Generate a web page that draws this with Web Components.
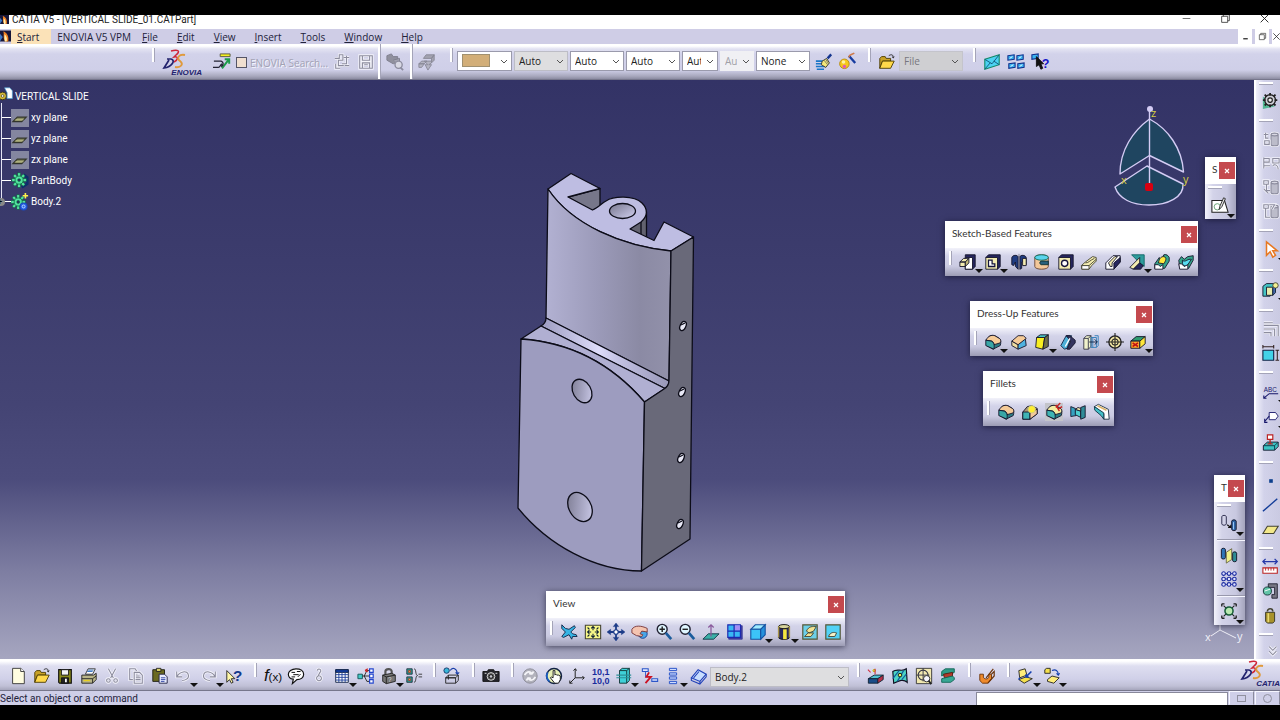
<!DOCTYPE html>
<html lang="en">
<head>
<meta charset="utf-8">
<title>CATIA V5 - [VERTICAL SLIDE_01.CATPart]</title>
<style>
  html, body { height: 100%; margin: 0; }
  body { background: #000; color: #22223a; font: 10px/14px "Open Sans", "Noto Sans", sans-serif; overflow: hidden; }
</style>
</head>
<body>
<catia-app></catia-app>
<script>
/* ---------- icon set, drawn on a 20 x 20 grid ---------- */
const p = (d, f = 'none', s = '#15152b', w = 1) => `<path d="${d}" fill="${f}" stroke="${s}" stroke-width="${w}"/>`;
const c = (x, y, r, f = 'none', s = '#15152b', w = 1) => `<circle cx="${x}" cy="${y}" r="${r}" fill="${f}" stroke="${s}" stroke-width="${w}"/>`;
const t = (x, y, txt, size, fill, extra = '') => `<text x="${x}" y="${y}" font-size="${size}" fill="${fill}" font-family="Liberation Sans, sans-serif" ${extra}>${txt}</text>`;
const GRAY = '#8c8c9e', LT = '#f4f4fb';
const ghost = (d, f = 'none') => p(d, 'none', LT, 3) + p(d, f, GRAY, 1.200);
const block = (front, body, top) =>
  p('M3 8C5 3 8 2 12 3L17 6C19 8 19 11 18 14L10 18 3 14Z', body) +
  p('M2 8C5 3 8 2 12 3L17 6C19 7 19 9 18 11L11 13C11 11 10 10 9 9Z', top) +
  p('M2 8 8 9C11 10 12 13 11 18L2 14Z', front);
const gear = (x, y, f) => {
  let s = '';
  for (let i = 0; i < 8; i++) s += `<rect x="${x - 1.5}" y="${y - 8}" width="3" height="5" fill="${f}" stroke="#063" stroke-width=".5" transform="rotate(${i * 45} ${x} ${y})"/>`;
  return s + c(x, y, 4.500, f, '#063', .8) + c(x, y, 1.600, '#2b2b60', '#063', .6);
};
const tank = ghost('M10 5C10 3 18 3 18 5V16C18 18 10 18 10 16ZM10 5C10 7 18 7 18 5', '#bcbcca');
const ICONS = {
  new: p('M4 1.500H13L17 5V18.500H4Z', '#fffde0', '#333') + p('M13 1.500V5H17', '#fff', '#333'),
  open: p('M2 6 4 4H8L9 6H14V9H5L2 17Z', '#c9a227', '#4a3a00') + p('M5 9H18L14 17H2Z', '#ffd84a', '#4a3a00') + p('M12 3C15 1 17 2 17 5M15.500 4 17 5.500 18 4', 'none', '#222'),
  save: p('M3 3H17V18H4L3 17Z', '#8a8a1a', '#111', 1.3) + p('M6 3H14V9H6Z', '#f4f4f4', '#111') + p('M6 12H14V18H6Z', '#222', '#111') + p('M11 13V17', 'none', '#fff', 2),
  print: p('M6 8 9 2H17L14 8Z', '#fff', '#333') + p('M8 5H14M9 3.500H15', 'none', '#2a6cc0') + p('M2 9H15L18 7V14L14 18H2Z', '#b9b58a', '#222') + p('M2 13H14L18 10M14 13V18', 'none', '#222') + p('M4 15H11', 'none', '#e8d020', 1.500),
  cut: ghost('M6 2 12 13M14 2 8 13') + ghost('M4 15A2 2 0 1 0 8 15 2 2 0 1 0 4 15M12 15A2 2 0 1 0 16 15 2 2 0 1 0 12 15'),
  copy: ghost('M3 2H9L11 5V14H3Z') + ghost('M8 6H14L17 9V18H8ZM10 10H14M10 12H15M10 14H15'),
  paste: p('M2 3H15V16H2Z', '#6b6a20', '#1c1c10') + p('M6 1.500H11V5H6Z', '#d8cf66', '#222') + p('M9 8H15L18 11V18H9Z', '#e8ecff', '#224') + p('M11 12H16M11 14H16M11 16H15', 'none', '#2a3ea0'),
  undo: ghost('M3 5V11H9M3 11C6 5 15 3 16 9C17 13 12 15 9 15'),
  redo: ghost('M17 5V11H11M17 11C14 5 5 3 4 9C3 13 8 15 11 15'),
  help: p('M2 4V17L5 14 7 18 9 17 7 13H11Z', '#fff7a8', '#222') + t(9, 15, '?', 17, '#123a8c', 'font-weight="bold"'),
  fx: t(0, 15, 'f', 19, '#111', 'font-style="italic"') + t(5, 15, '(x)', 13, '#111'),
  bubble: p('M10 2C15 2 18.500 4 18.500 8S15 14 11 14L6 18.500 7 13.500C3 13 1.500 11 1.500 8S5 2 10 2Z', '#fff', '#111', 1.300) + p('M5 6H9M7 8.500H13M11 5H15M5 11H9M12 11 15 8', 'none', '#111', 1.100),
  link: ghost('M8 4A2 2 0 1 1 11 6L9 10M9 10A2.500 2.500 0 1 0 11 15 2 2 0 1 0 9 10'),
  table: p('M3 3H17V17H3Z', '#fff', '#124') + p('M3 3H17V6H3Z', '#123ca0', '#124') + p('M3 8.500H17M3 11.500H17M3 14.500H17M6.500 6V17M10 6V17M13.500 6V17', 'none', '#1c3d9a'),
  reltree: p('M1 8H6V13H1Z', '#45c8c8', '#155') + p('M6 10H14M8 10 11 4H14M8 10 11 16H14', 'none', '#222') + p('M9 4 12 2M9 4l3 1', 'none', '#c22', 1.500) + p('M14 2H18V6H14ZM14 8H18V12H14ZM14 14H18V18H14Z', '#fff', '#2244cc', 1.300),
  lock: p('M6 9V5C6 2 13 1 13 5V8', 'none', '#555', 2.400) + p('M3 9 13 7 17 9V16L7 18.500 3 16Z', '#777', '#222') + p('M3 9 7 11V18.500M7 11 17 9', 'none', '#222') + t(9, 17, '?', 7, '#ddd'),
  eq: p('M2 2H8V8H2ZM2 11H8V17H2Z', '#2e9c8c', '#234') + p('M4 4H6V6H4Z', '#e8d84a', '#a33') + p('M4 13H6V15H4Z', '#e8d84a', '#a33') + p('M10 2C13 2 11 9 14 9.500 11 10 13 17 10 17', 'none', '#333') + p('M15 8H19M15 11H19', 'none', '#333'),
  catalog: c(4, 4, 3, '#39b6d8', '#136') + p('M8 4C10 0 15 1 16 7M14 6 16 8 18 6', 'none', '#1a3ea8', 1.200) + p('M3 12 6 9H17L14 12ZM3 12V18H14V12ZM14 18 17 15V9M6 9V14', 'none', '#222'),
  camera: p('M1 5H6L7 3H13L14 5H19V16H1Z', '#26262c', '#111') + c(10, 10.500, 4.300, '#555', '#ddd') + c(10, 10.500, 2, '#c8c8d0', '#111') + p('M3 7H5M15 7H17', 'none', '#eee'),
  update: c(10, 10, 8, '#b2b2bc', '#8b8b96') + p('M4 9C7 4 11 5 12 8M12 8 9 7M12 8 14 5M16 11C13 16 9 15 8 12M8 12 11 13M8 12 6 15', 'none', '#f4f4f8', 2),
  manual: c(10, 10, 8.300, '#e7efb8', '#124', 1.600) + p('M3 6C1 9 2 14 5 16', 'none', '#1a5cc0', 2) + p('M10 17 6 12 7 11 9 12V4H11V9L12 8 13 9 15 9 17 10V14L15 18H11Z', '#fff', '#111'),
  axis: p('M8 12V2M6 4 8 2 10 4M8 12H18M16 10 18 12 16 14M8 12 2 18M2 15V18H5', 'none', '#222', 1.100),
  mean: t(0, 9, '10,1', 10, '#1a2c9c', 'font-weight="bold"') + t(0, 19, '10,0', 10, '#1a2c9c', 'font-weight="bold"'),
  cylbox: p('M5 4 8 1.500H16V15L13 18H5Z', '#3fd0d8', '#133') + p('M5 4H13V18M13 4 16 1.500', 'none', '#133') + p('M1.500 9H18M1.500 12H18', 'none', '#2b8f98', 1.200),
  cutlink: p('M1.500 2H8V5H1.500ZM12 13H18.500V16H12Z', '#dfe6ff', '#2b55c8', 1.200) + p('M5 5V11H8', 'none', '#2b55c8') + p('M9 6 6 11H11L5 18', 'none', '#cc1122', 2),
  stack: p('M6 1.500H14V4H6ZM6 6.500H14V9H6ZM6 11H14V13.500H6ZM6 16H14V18.500H6Z', '#cfdcff', '#2b55c8', 1.100),
  slab: p('M1.500 12 9 3 18 8 11 16Z', '#c8ddff', '#2040b8', 1.200) + p('M1.500 12V15L11 19 18 11V8M11 16V19M4 12 10 5', 'none', '#2040b8', 1.200),
  bsketch: p('M1.500 13 8 9H18L12 13Z', '#50c0d0', '#123') + p('M1.500 13H12V18H1.500Z', '#1a4c88', '#123') + p('M12 13 18 9V14L12 18Z', '#b83048', '#123') + c(8, 4, 1.300, '#ffe040', '#aa0') + p('M1 3 4 6M9 2V8', 'none', '#d03040', 1.200),
  bsurf: p('M2 5C7 1 12 6 17 2L18 17C14 13 9 15 3 18Z', '#4cd4c4', '#112', 1.300) + p('M2 13 9 4M7 16 14 4M12 14 17 8', 'none', '#0f5ca0', 1.300) + c(10, 9, 2, '#f0f060', '#111'),
  bzoom: p('M1.500 1.500H18.500V18.500H1.500Z', '#f1e8b0', '#333') + c(9, 9, 5.500, 'none', '#334', 1.200) + p('M9 1.500V16M1.500 9H16', 'none', '#334') + c(13, 13, 3.500, '#f6f6ff', '#222') + p('M15 15 18 19', 'none', '#222', 2),
  bband: p('M3 5 7 2H17V6L13 8H7L3 10Z', '#2e9a86', '#165') + p('M5 8 15 6V11L6 12Z', '#b33a2a', '#5a1a10') + p('M3 13 15 10 17 12V14L13 17H3Z', '#38a794', '#165'),
  bcup: p('M2 8H6V11C6 14 12 14 12 11V8H15V13L11 18H5L2 15Z', '#ef8a2c', '#6a3208') + p('M15 8 18 5V10L11 18M9 12 17 2', 'none', '#6a3208', 1.300),
  bpub: p('M2 4 9 2 11 9 3 12Z', '#ffee7a', '#222') + p('M2 14 10 11 17 13 8 18Z', '#f5e04c', '#222') + p('M3 12 2 14M16 5 10 11M10 8V11H13', 'none', '#1440b0', 1.700),
  bcopy: p('M2 3 4 1.500H8V7H2Z', '#f5e04c', '#222') + p('M10 4C14 2 17 4 17 9M15 7 17 9 18.500 7', 'none', '#1440b0', 1.200) + p('M5 14 10 10 18 12 12 18 5 16Z', '#ffee7a', '#222'),
  sync: p('M10 17 17 8M13 7H18V12', 'none', '#1d9a4a', 2.200) + p('M1 9H9C12 10 12 14 9 15M0 16H6C8 16 8 13 10 12', 'none', '#223', 1.500) + p('M8 1H19V4H8Z', '#f4f020', '#554'),
  gtree: ghost('M2 6H7V2H11V8H6V14H12M12 5H18M15 3V12H10M13 14H18M3 12V17H8'),
  gsave: ghost('M3 3H17V17H3ZM6 3V8H14V3M6 17V11H14V17M8 13H12'),
  gcopy: p('M1 3 6 1 8 4H13V10L8 12 1 8Z', '#90909e', '#7d7d8c') + p('M8 8 15 6V12', '#a4a4b2', '#7d7d8c') + c(14, 13, 4, '#d8d8e4', GRAY, 1.500) + p('M16 16 19 19', 'none', GRAY, 2),
  gbox: p('M6 6 9 2H18L15 6ZM15 6 18 2V8L15 11Z', '#a2a2b0', '#888896') + p('M1 12 4 9H10L7 12ZM1 12H7L4 16H1ZM7 9H15V11L12 13H15L11 19 8 13H11Z', '#b4b4c2', '#888896'),
  brush: p('M1 9H11M1 12H10M1 15H12M2 18H10', 'none', '#1976c8', 1.800) + p('M8 9 13 6 16 11 12 16 7 13Z', '#f4e878', '#333') + p('M10 8 14 13M12 7 15 12', 'none', '#776') + p('M14 6 18 1.500', 'none', '#13348e', 2.600),
  ball: c(6, 12, 5.300, '#f6c81c', '#b88a10') + c(6, 15, 2, '#e05cae', 'none') + c(5, 10, 2, '#fff2a0', 'none') + p('M11 3 18 11', 'none', '#173ca0', 2.600) + p('M11 5C11 1 15 2 17 0', 'none', '#cf7a4a', 1.600),
  mail: p('M2 7 18 2V13L2 18Z', '#4cd2f2', '#186', 1.200) + p('M2 7 10 12 18 2M2 18 8 11M18 13 12 9', 'none', '#157', 1),
  grid4: [[1, 4], [11, 4], [2, 13], [12, 13]].map(([x, y]) => p(`M${x} ${y - 1}L${x + 7} ${y - 2}V${y + 3}L${x} ${y + 4}Z`, '#3ab4f0', '#12308c', 1.200) + p(`M${x + 2} ${y + 2}L${x + 5} ${y}`, 'none', '#fff')).join(''),
  whats: p('M1 2 8 1V6L1 7Z', '#3ab4f0', '#12308c', 1.200) + p('M6 4V15L9 13 11 18 13 17 11 12H14Z', '#111', '#111') + t(12, 17, '?', 14, '#1515c8', 'font-weight="bold"'),
  pad: p('M7 2H18V15L15 18H7Z', '#26265e') + p('M7 5H15V18H7Z', '#fff') + p('M1 10 5 6H11L7 10ZM1 10H7V15H1Z', '#f3ecb0') + p('M7 15 11 11V6L7 10Z', '#c4bb78'),
  pocket: p('M2 5 5 2H18V15L15 18Z', '#26265e') + p('M2 5H15V18H2Z', '#f3ecb0') + p('M5 8H9V12H12V15H5Z', '#fff', '#15153a', 1.400),
  shaft: p('M2 5C3 2 8 2 9 4V18L6 15V10L4 14 2 13Z', '#203c80') + p('M11 4C12 2 17 2 18 5V13L15 14V9L13 10V17L11 18Z', '#203c80') + p('M14 6H18V14H14Z', '#f3ecb0') + p('M10 1V19', 'none', '#667', .8),
  groove: p('M2 5C2 1 17 1 17 5V15C17 19 2 19 2 15Z', '#f3c89a', '#643') + p('M2 5C2 1 17 1 17 5S2 9 2 5Z', '#5ad4ec', '#165') + p('M9 9H17V13H9C7 12 7 10 9 9Z', '#28607c', '#133'),
  hole: p('M2 5 5 2H18V15L15 18Z', '#26265e') + p('M2 5H15V18H2Z', '#f3ecb0') + c(8.500, 11.500, 3.500, '#fff', '#15153a', 1.500),
  rib: p('M1.500 14 6 10 14 4 18 5V9L13 14 10 18H2Z', '#f3ecb0', '#443') + p('M6 11C10 11 11 8 16 6M2 14H10L18 7', 'none', '#443') + p('M2 14H10V18H2Z', '#fff', '#443'),
  slot: p('M2 11 10 3H18V10L11 18H2Z', '#fff') + p('M5 11 12 4H15L9 11V15H7Z', '#f3ecb0') + p('M11 11 18 5V10L11 18Z', '#26265e'),
  stiff: p('M4 2H18V15L13 11Z', '#2e9c9c', '#166') + p('M2 16 13 5V11L6 18Z', '#f3ecb0') + p('M6 18 13 11 17 14 14 18Z', '#26265e'),
  multi: p('M2 12 7 5 9 8 12 2C15 1 17 3 18 5V9L13 17H2Z', '#35a68c') + p('M6 11C7 7 8 4 12 4 16 5 14 9 12 12Z', '#ffe93c') + p('M2 13H6L8 15 11 13V18H2Z', '#fff'),
  loft: p('M2 8 5 4 8 7 12 4 18 3V8L13 17H3Z', '#35a68c') + p('M6 8C9 11 12 6 16 7L12 13C10 16 7 14 6 12Z', '#58dcf0') + p('M2 12H5L8 15 12 13V18H3Z', '#fff'),
  fillet: block('#39a6a6', '#2c7d86', '#f5cb98'),
  chamfer: p('M2 9 9 13V18L2 14Z', '#f0dda0') + p('M9 13 17 6 18 14 9 18Z', '#4fb2e0') + p('M2 9 9 3H15L18 6 9 13Z', '#f5cb98'),
  draft: p('M4 5 8 2H17L13 5Z', '#48c4c4') + p('M4 5H13L11 18 3 16Z', '#f8ee20') + p('M13 5 17 2V15L11 18Z', '#6c6c48'),
  shell: p('M2 14 8 3 14 3 9 17 6 18Z', '#4db0d8', '#124') + p('M8 3H12L18 8V11L12 18H9L13 9Z', '#33335e') + p('M7 15 12 6', 'none', '#fff', 1.500),
  thick: p('M2 6 5 3H10V15L7 18H2ZM2 6H7V18M7 6 10 3', '#f0f2cc', '#334') + p('M10 5H16V16H10ZM12 5V16M14 3H18V14L16 16', 'none', '#2e7cb8') + p('M8 10H17M14 7 17 10 14 13', 'none', '#124'),
  target: c(10, 10, 6.800, '#f5e9a4', '#222', 1.500) + c(10, 10, 3.400, 'none', '#222', 1.200) + p('M10 0V20M0 10H20', 'none', '#222', 1.200),
  remove: p('M2 9 8 4H18L12 9Z', '#2f9c70') + p('M2 9H12V17H2Z', '#ffa92b') + p('M12 9 18 4V12L12 17Z', '#ffe63a') + p('M4 11 10 15M10 11 4 15', 'none', '#c21212', 1.700),
  fvar: p('M2 10 7 4 12 3 18 6V12L10 18H2Z', '#a89878') + p('M2 10H10V18H2Z', '#3fb4b4') + p('M10 10 18 7V12L10 18Z', '#f3c89a') + c(12, 7, 4, '#ffee30', '#cc8'),
  fface: block('#3fb4b4', '#2c7d86', '#f5eca0') + p('M12 5 17 0M14 7 19 4M12 2 16 9', 'none', '#c62222', 1.500),
  ftri: p('M2 4 7 6 8 14 2 15Z', '#36a2c0') + p('M7 7 13 9 13 16 7 13Z', '#4fd0d0') + p('M13 5 18 3V16L13 18Z', '#2f8c98') + p('M7 7 10 5 13 6V9Z', '#f3ecb0'),
  ftrim: p('M1.500 4 6 1.500 17 7 18 18H12V12Z', '#fff', '#234') + p('M1.500 4 12 11V18L9 14 2 8Z', '#43c0c8', '#134') + p('M5 3 15 8', 'none', '#dcb46c', 2),
  fly: p('M2 2 6 6 10 7 16 3 17 5 12 10 14 12 18 13 19 15 14 15 13 18 10 13 4 16 2 15 6 10 2 6Z', '#35b4e4', '#124', 1),
  fit: p('M1.500 2.500H18.500V17.500H1.500Z', '#f8f788', '#443', 1.200) + p('M10 4V8M10 12V16M4 10H8M12 10H16M8 6 10 4 12 6M8 14 10 16 12 14M6 8 4 10 6 12M14 8 16 10 14 12M4 5 6 7M16 5 14 7M4 15 6 13M16 15 14 13', 'none', '#123', 1.200),
  pan: p('M10 2V18M2 10H18', 'none', '#1c3c88', 2) + p('M10 0 7 4H13ZM10 20 7 16H13ZM0 10 4 7V13ZM20 10 16 7V13Z', '#1c3c88', '#1c3c88', .5) + c(10, 10, 2.500, '#fff', '#1c3c88', 1.300),
  rotate: c(13, 12, 5, '#48a6e8', '#123c90') + p('M1 7C4 2 12 3 18 6L18 10 12 9 10 12 13 13 12 15 6 14 1 11Z', '#f4c4b0', '#733'),
  zoomin: c(8, 7, 5.500, '#dff6ff', '#223', 1.600) + p('M5 7H11M8 4V10', 'none', '#222', 1.600) + p('M12 11 18 18', 'none', '#1a5c9c', 3),
  zoomout: c(8, 7, 5.500, '#dff6ff', '#223', 1.600) + p('M5 7H11', 'none', '#222', 1.600) + p('M12 11 18 18', 'none', '#1a5c9c', 3),
  normal: p('M1 18 7 12H19L13 18Z', '#3bb0a8', '#134') + p('M10 15V2M7 5 10 2 13 5', 'none', '#8a5a9c', 1.400),
  multiv: p('M3 3H18V18H3Z', '#3c3c9c', '#3c3c9c') + p('M2 2H16V16H2Z', '#39b8f4', '#1c28b0', 1.300) + p('M9.500 2.500H15.500V8.500H9.500Z', '#a48cf4', 'none') + p('M9 2V16M2 9H16', 'none', '#1c28b0', 1.300),
  iso: p('M2 7 7 2H18L13 7Z', '#a0ecff', '#1450a0', 1.200) + p('M2 7H13V18H2Z', '#3cc4f8', '#1450a0', 1.200) + p('M13 7 18 2V13L13 18Z', '#2590dc', '#1450a0', 1.200),
  shade: p('M4 4V16C4 19 16 19 16 16V4', '#28285e', '#111') + p('M9 7H13V18H9Z', '#f3e640', 'none') + p('M4 4C4 1 16 1 16 4S4 7 4 4Z', '#d8d49c', '#111') + p('M4 4V16M16 4V16', 'none', '#a8954a', 1.600),
  hide: p('M2 2H18V18H2Z', '#6ccfe8', '#553', 1.300) + p('M6 9C9 3 13 4 17 4L14 9 9 11ZM4 15 8 11 14 11 11 15Z', '#f0e292', '#443'),
  swap: p('M2 2H18V18H2Z', '#52d2f6', '#553', 1.300) + p('M5 15C7 10 11 10 14 11L12 15Z', '#f4f2c8', '#443'),
  sketch: p('M1 5H15L19 18H1Z', '#fff', '#222', 1.200) + c(7, 12, 3.500, 'none', '#5c9c6c') + p('M9 15 10 11 14 2 16 3 12 12Z', '#e8e8e8', '#222'),
  gearbig: p('M1 5V19L14 16Z', '#54b894', 'none') + c(9, 9, 6, '#d0d0d8', '#222', 1.500) + c(9, 9, 2.500, '#f0f0f0', '#222', 1.300) + p('M9 1V4M9 14V17M1 9H4M14 9H17M3 3 5 5M13 13 15 15M15 3 13 5M3 15 5 13', 'none', '#222', 2),
  g1: tank + ghost('M2 5H7M4 3V9H7M3 12H8V16H3Z'),
  g2: ghost('M2 4V16M2 5H8V9H2M2 13H9') + ghost('M12 5H19V10H12ZM12 13C14 11 18 12 18 17'),
  g3: tank + ghost('M2 3H7V7H2ZM5 7V14H9M2 12 7 17'),
  g4: tank + ghost('M2 3H7V7H2ZM4 7V17H9M8 3H14L11 8'),
  select: p('M5 2V17L9 13 12 19 15 17 12 12H17Z', '#fff', '#e87820', 1.700),
  iview: p('M1 7 5 4H13V9L9 18H1Z', '#44c4c4') + p('M5 8H12V17H5Z', '#e8ecac') + c(15, 6, 3, '#f3ef90', '#443') + p('M12 9V17L15 14V9', '#46a', '#123'),
  gplan: ghost('M2 3H12M2 6H18V18M2 10H14V18M2 14H10V18'),
  constr: p('M1 7H13V18H1Z', '#42d2e8', '#124', 1.200) + p('M1 3H13M1 1V5M13 1V5M17 7V18M15 7H19M15 18H19', 'none', '#322', 1.200),
  abc: t(2, 11, 'ABC', 7, '#16166a') + p('M18 13H8L2 18M2 15V18H5', 'none', '#16166a', 1.200),
  flag: p('M8 5H15L18 9 15 13H8Z', '#fff', '#16166a') + p('M8 9 3 15M3 12V16H6', 'none', '#16166a', 1.200),
  stamp: p('M1.500 13 6 9H18V14L14 18H1.500Z', '#3cc4c4') + p('M1.500 13H14V18M14 13 18 9', 'none', '#134') + p('M6 1H12V6H6Z', '#fff', '#b22', 1.300) + p('M9 6V11M6 11H12', 'none', '#b22', 1.500),
  point: `<rect x="8" y="8" width="4" height="4" fill="#0c3f8c"/>`,
  line: p('M1 17 17 3', 'none', '#123c98', 1.600),
  plane: p('M1 15 6 7H18L13 15Z', '#f3e88a', '#443', 1.200),
  measure: p('M1 4H17M4 1 1 4 4 7M14 1 17 4 14 7', 'none', '#2438a8', 1.400) + p('M1 11H17V17H1Z', '#fff', '#b22', 1.200) + p('M4 11V14M7 11V14M10 11V14M13 11V14', 'none', '#b22'),
  caliper: p('M7 2H17V18H11V14H14V6H7Z', '#777784', '#223') + c(6, 10, 4.500, '#62c4a8', '#133') + p('M3 10 9 8', 'none', '#fff'),
  mass: p('M6 6A3 3 0 1 1 12 6', 'none', '#443', 1.700) + p('M4 7H14V17L12 19H6L4 17Z', '#a8922c', '#332') + p('M7 8V18', 'none', '#e8d870', 1.800),
  chev: ghost('M8 3 12 7 16 3M8 8 12 12 16 8'),
  trans: p('M2 3C2 1 7 1 7 3V11C7 13 2 13 2 11Z', 'none', '#224') + p('M8 12 12 15M9 15H12V12', 'none', '#111', 1.300) + p('M13 8C13 6 18 6 18 8V17C18 19 13 19 13 17Z', '#2f66a8', '#112') + p('M15 9V17', 'none', '#a8d4ff'),
  mirror: p('M1.500 4C1.500 2 6 2 6 4V13C6 15 1.500 15 1.500 13Z', '#2f74b8', '#112') + p('M14 8C14 6 18.500 6 18.500 8V16C18.500 18 14 18 14 16Z', '#2f8c94', '#112') + p('M7 7 13 3V15L7 19Z', '#f1f088', '#664'),
  pattern: [4, 10, 16].map(y => p(`M2 ${y}H18`, 'none', '#1c2ca0') + [4, 10, 16].map(x => c(x, y, 2, '#dfe2ff', '#1c2ca0', 1.200)).join('')).join(''),
  scale: p('M4 4 16 16M16 4 4 16', 'none', '#222', 1.200) + p('M2 2H5M2 2V5M18 2H15M18 2V5M2 18H5M2 18V15M18 18H15M18 18V15', 'none', '#222', 1.500) + c(10, 10, 4.500, '#b8e8b0', '#175c38', 1.700),
  tplane: `<rect width="20" height="20" fill="#8486a0"/>` + p('M2 14 7 9H17L12 14Z', '#85885f', '#32352c', 1.200) + p('M5 12H14', 'none', '#d8d8a0', .8),
  body: p('M12 17 18 13V6L14 3', 'none', '#0c2f6c', 3) + gear(9, 9, '#54e0a0'),
  body2: gear(8, 10, '#54e0a0') + p('M16 0V6M13 3H19', 'none', '#fff04c', 1.800) + c(14, 15, 3.800, '#2a62e8', '#1c48c0', 1.200) + c(14, 15, 1.600, 'none', '#c4e0ff', 1),
  part: c(4, 13, 6, '#d4b838', '#332', 1.500) + c(4, 13, 2, '#fff', '#332') + p('M7 .500H15L19 5V17H11V8Z', '#fff', '#48a4d8'),
  flame: `<rect width="20" height="20" fill="#161638"/><path d="M9 20C5 12 8 7 6 2C11 3 17 9 15 20Z" fill="#f08020"/><path d="M9 20C7 14 9 10 8 7C11 9 14 14 12 20Z" fill="#fff1b0"/><path d="M0 6 5 12 0 20Z" fill="#3c78c8"/>`,
  wmin: p('M3 10H17', 'none', '#555', 1.500),
  wmax: p('M3 6H14V17H3ZM6 6V3H17V14H14', 'none', '#333', 1.500),
  wclose: p('M3 3 17 17M17 3 3 17', 'none', '#222', 1.700),
  xmark: p('M5 5 15 15M15 5 5 15', 'none', 'currentColor', 3),
  bar: p('M5 15H15', 'none', '#333', 3)
};

const define = (name, html, init) => customElements.define(name, class extends HTMLElement {
  constructor() {
    super();
    const tpl = document.createElement('template');
    tpl.innerHTML = html;
    this.attachShadow({ mode: 'open' }).append(tpl.content.cloneNode(true));
  }
  connectedCallback() { if (init) init(this, this.shadowRoot); }
});

define('cat-icon', `<style>:host{display:block;width:20px;height:20px;flex:none}svg{display:block;width:100%;height:100%;overflow:visible}</style><svg viewBox="0 0 20 20" aria-hidden="true"></svg>`,
  (h, r) => { r.querySelector('svg').innerHTML = ICONS[h.getAttribute('name')] || ''; });

define('tool-button', `<style>
  :host{display:block;flex:24 1 0;min-width:0;position:relative}
  :host([more]){flex-grow:26}
  button{all:unset;box-sizing:border-box;display:block;padding:2px;height:24px}
  cat-icon{width:18px;height:18px;margin:1px}
  :host([lit]) cat-icon{background:#c4c4ca}
  i{display:none;position:absolute;left:19px;bottom:1px;border:4px solid transparent;border-top-color:#111;border-bottom:0}
  :host([more]) i{display:block}
  </style><button type="button"><cat-icon></cat-icon></button><i></i>`,
  (h, r) => {
    const icon = r.querySelector('cat-icon');
    icon.setAttribute('name', h.getAttribute('icon'));
    icon.connectedCallback();
    r.querySelector('button').setAttribute('aria-label', h.getAttribute('label') || h.getAttribute('icon'));
  });

define('tool-group', `<style>:host{display:flex;align-items:flex-start;flex:none;width:var(--w,24px)}</style><slot></slot>`);

define('grip-line', `<style>
  :host{display:block;flex:none;width:15px;align-self:stretch}
  div{width:2px;height:14px;margin:4px 0 0 8px;background:#fff;box-shadow:1px 0 #a4a4b8}
  :host([short]){width:11px} :host([short]) div{margin:3px 0 0 4px}
  :host([full]){width:2px} :host([full]) div{height:100%;margin:0}
  :host([flat]){width:auto;height:14px} :host([flat]) div{width:14px;height:2px;margin:6px 0 0 3px;box-shadow:0 1px #a4a4b8}
  :host([flat][first]){height:9px} :host([flat][first]) div{margin-top:2px}
  </style><div></div>`);

define('combo-box', `<style>
  :host{display:block;flex:none;position:relative;width:var(--w,54px);height:20px}
  select{appearance:none;box-sizing:border-box;width:100%;height:100%;margin:0;padding:0 16px 0 4px;border:1px solid #9a9aac;border-radius:0;background:#fff;color:#222;font:10px/16px "Open Sans",sans-serif;opacity:1;text-overflow:clip}
  :host([grey]) select{background:#dedee0;border-color:#bdbdc6}
  :host([off]) select{background:#cfcfd2;color:#77777f;border-color:#c4c4cc}
  :host([pale]) select{background:#f0f0f4;color:#a0a0a8;border-color:#f0f0f4}
  svg{position:absolute;right:4px;top:8px;width:8px;height:6px;pointer-events:none}
  span{display:none;position:absolute;left:5px;top:3px;width:28px;height:13px;background:#d2ae78;border:1px solid #a09070;box-sizing:border-box}
  :host([swatch]) span{display:block}
  </style><select><option></option></select><span></span><svg viewBox="0 0 8 6" aria-hidden="true"><path d="M1 1 4 4 7 1" fill="none" stroke="#555"/></svg>`,
  (h, r) => {
    const s = r.querySelector('select');
    s.options[0].textContent = h.getAttribute('value') || '';
    s.setAttribute('aria-label', h.getAttribute('label'));
    s.disabled = h.hasAttribute('off') || h.hasAttribute('pale');
  });

define('ds-logo', `<style>:host{display:block;flex:none;width:40px;height:27px}svg{display:block;width:100%;height:100%;overflow:visible}text{font:italic bold 8px "Liberation Sans",sans-serif;fill:#23236e;text-anchor:end}</style>
  <svg viewBox="0 0 40 27"><g transform="translate(2 0)"><path d="M7 2C14 0 17 2 12 6L10 8C15 7 14 11 10 13" fill="none" stroke="#cf2638" stroke-width="1.500"/><path d="M3 10H7C12 11 8 18 0 19L5 11" fill="none" stroke="#23236e" stroke-width="1.700"/><path d="M21 6C15 5 12 9 16 12C20 15 17 19 11 18" fill="none" stroke="#e09a3c" stroke-width="2"/></g><text x="40" y="26"></text></svg>`,
  (h, r) => { r.querySelector('text').textContent = h.getAttribute('brand'); });

define('title-bar', `<style>
  :host{display:flex;align-items:flex-start;height:14px;overflow:hidden;background:#fff;color:#222}
  cat-icon{width:9px;height:9px} h1{flex:1;margin:0 0 0 3px;font:10px/10px Roboto,sans-serif;white-space:nowrap}
  nav{display:flex;gap:28px;padding-right:10px} button{all:unset;display:block} nav cat-icon{width:11px;height:11px;margin-top:-2px}
  </style><cat-icon name="flame"></cat-icon><h1>CATIA V5 - [VERTICAL SLIDE_01.CATPart]</h1>
  <nav><button aria-label="Minimize"><cat-icon name="wmin"></cat-icon></button><button aria-label="Restore"><cat-icon name="wmax"></cat-icon></button><button aria-label="Close"><cat-icon name="wclose"></cat-icon></button></nav>`);

define('menu-bar', `<style>
  :host{display:flex;height:15px;background:#cfcde6;color:#22223a}
  cat-icon{width:11px;height:12px;margin-top:1px}
  nav{display:flex;flex:1} a{color:inherit;text-decoration:none;padding:0 9px 0 10px;line-height:16px;height:15px;white-space:nowrap}
  a.start{background:#fbe2b8;padding:0 12px 0 6px} a.product{padding:0 1px 0 6px}
  div{display:flex;gap:3px} button{all:unset;background:#fff;width:14px;display:grid;place-items:center} button cat-icon{width:9px;height:9px;margin:0}
  div button:last-child{width:8px;overflow:hidden}
  </style><cat-icon name="flame"></cat-icon>
  <nav><a href="#" class="start"><u>S</u>tart</a><a href="#" class="product">ENOVIA V5 VPM</a><a href="#"><u>F</u>ile</a><a href="#"><u>E</u>dit</a><a href="#"><u>V</u>iew</a><a href="#"><u>I</u>nsert</a><a href="#"><u>T</u>ools</a><a href="#"><u>W</u>indow</a><a href="#"><u>H</u>elp</a></nav>
  <div><button aria-label="Minimize document"><cat-icon name="bar"></cat-icon></button><button aria-label="Restore document"><cat-icon name="wmax"></cat-icon></button><button aria-label="Close document"><cat-icon name="wclose"></cat-icon></button></div>`);

define('top-tools', `<style>
  :host{display:flex;box-sizing:border-box;height:36px;border-bottom:1px solid #77778c;background:linear-gradient(#fff 0 2px,#e2e2f2 5px,#d2d2ea 10px,#cfcfe8 26px,#a9a9be 32px,#8c8ca2);padding-left:144px}
  .row{display:flex;align-items:flex-start;padding-top:6px}
  ds-logo{margin:5px 8px 0 3px}
  label{display:flex;align-items:center;gap:3px;height:25px;width:94px;padding-left:2px;color:#a2a2b4;white-space:nowrap;text-shadow:1px 1px #f4f4fc}
  input{appearance:none;box-sizing:border-box;width:11px;height:11px;margin:0;border:1px solid #555566;background:#f0dfd0}
  .combos{gap:2px;padding-top:7px;margin-right:2px}
  .lead{padding:6px 3px 0}
  </style>
  <grip-line></grip-line><ds-logo brand="ENOVIA"></ds-logo>
  <div class="row"><tool-group><tool-button icon="sync" label="Connect"></tool-button></tool-group></div>
  <div class="row"><label><input type="checkbox">ENOVIA Search...</label><tool-group style="--w:48px"><tool-button icon="gtree"></tool-button><tool-button icon="gsave"></tool-button></tool-group></div>
  <grip-line full></grip-line>
  <div class="row lead"><tool-group><tool-button icon="gcopy"></tool-button></tool-group></div>
  <grip-line full></grip-line>
  <div class="row lead"><tool-group><tool-button icon="gbox"></tool-button></tool-group></div>
  <grip-line></grip-line>
  <div class="row combos"><combo-box swatch label="Fill colour" style="--w:55px"></combo-box><combo-box grey value="Auto" label="Transparency"></combo-box><combo-box value="Auto" label="Line thickness"></combo-box><combo-box value="Auto" label="Line type"></combo-box><combo-box value="Auto" label="Point symbol" style="--w:36px"></combo-box><combo-box pale value="Auto" label="Rendering" style="--w:34px"></combo-box><combo-box value="None" label="Layer"></combo-box></div>
  <div class="row"><tool-group style="--w:48px"><tool-button icon="brush"></tool-button><tool-button icon="ball"></tool-button></tool-group></div>
  <grip-line></grip-line>
  <div class="row"><tool-group><tool-button icon="open"></tool-button></tool-group></div>
  <div class="row combos"><combo-box off value="File" label="File" style="--w:64px"></combo-box></div>
  <grip-line></grip-line>
  <div class="row"><tool-group style="--w:72px"><tool-button icon="mail"></tool-button><tool-button icon="grid4"></tool-button><tool-button icon="whats"></tool-button></tool-group></div>`);

const btn = list => list.split(' ').map(s => `<tool-button icon="${s.replace('+', '')}"${s.endsWith('+') ? ' more' : ''}></tool-button>`).join('');

define('bottom-tools', `<style>
  :host{display:flex;box-sizing:border-box;height:32px;border-bottom:1px solid #77778c;background:linear-gradient(#fff 0 2px,#dedef0 7px,#d0d0e8 20px,#c0c0d6 27px,#a6a6bc);padding:0 0 0 6px}
  tool-group{padding-top:5px} combo-box{margin-top:8px} .fill{flex:1} ds-logo{margin-top:1px}
  </style>
  <tool-group style="--w:240px">${btn('new open save print cut copy paste undo+ redo+ help')}</tool-group><grip-line></grip-line>
  <tool-group style="--w:164px">${btn('fx bubble link table+ reltree lock+ eq')}</tool-group><grip-line></grip-line>
  <tool-group>${btn('catalog')}</tool-group><grip-line></grip-line>
  <tool-group>${btn('camera')}</tool-group><grip-line></grip-line>
  <tool-group style="--w:192px">${btn('update manual axis mean cylbox+ cutlink stack+ slab')}</tool-group>
  <combo-box grey value="Body.2" label="In work object" style="--w:139px"></combo-box><grip-line></grip-line>
  <tool-group style="--w:96px">${btn('bsketch bsurf bzoom bband')}</tool-group><grip-line></grip-line>
  <tool-group>${btn('bcup')}</tool-group><grip-line></grip-line>
  <tool-group style="--w:52px">${btn('bpub+ bcopy+')}</tool-group>
  <div class="fill"></div><ds-logo brand="CATIA"></ds-logo>`);

define('status-bar', `<style>
  :host{display:flex;height:14px;background:#cfcfe8;color:#22223a}
  output{flex:1;padding-top:2px;font:10px/12px Roboto,sans-serif;white-space:nowrap}
  input{box-sizing:border-box;width:252px;height:13px;margin:1px 0 0;border:1px solid #88889a;border-bottom:0;background:#fff}
  button{all:unset;box-sizing:border-box;width:25px;height:14px;margin-left:1px;border:1px solid;border-color:#f6f6ff #8a8a9c transparent #f6f6ff;display:grid;place-items:center}
  button i{width:7px;height:5px;border:1px solid #90909f}
  button i.round{width:7px;height:7px;border-radius:50%}
  </style><output>Select an object or a command</output><input type="text" aria-label="Power input"><button aria-label="Command list"><i></i></button><button aria-label="Information"><i class="round"></i></button>`);

define('spec-tree', `<style>
  :host{display:block;position:absolute;left:0;top:5px;color:#fff;font-family:Roboto,sans-serif}
  ul{list-style:none;margin:0;padding:0;position:relative}
  ul::before{content:"";position:absolute;left:1px;top:18px;bottom:10px;width:1px;background:#e4e4f4}
  li{display:flex;align-items:center;gap:2px;height:21px;line-height:21px;padding-left:11px;position:relative;white-space:nowrap}
  li:first-child{padding-left:0;height:22px}
  li::before{content:"";position:absolute;left:2px;top:10px;width:9px;height:1px;background:#fff}
  li:first-child::before{display:none}
  cat-icon{width:18px;height:18px} li:first-child cat-icon{width:13px;height:18px;align-self:flex-start}
  li:last-child::after{content:"+";position:absolute;left:-3px;top:7px;width:8px;height:8px;border-radius:50%;background:#888;color:#000;font:bold 9px/8px "Liberation Sans",sans-serif}
  </style><ul><li><cat-icon name="part"></cat-icon>VERTICAL SLIDE</li><li><cat-icon name="tplane"></cat-icon>xy plane</li><li><cat-icon name="tplane"></cat-icon>yz plane</li><li><cat-icon name="tplane"></cat-icon>zx plane</li><li><cat-icon name="body"></cat-icon>PartBody</li><li><cat-icon name="body2"></cat-icon>Body.2</li></ul>`);

define('slide-model', `<style>:host{display:block;position:absolute;left:510px;top:85px;width:200px;height:415px}svg{display:block;width:100%;height:100%}</style>
  <svg viewBox="510 165 200 415" role="img" aria-label="Vertical slide part">
  <defs>
    <linearGradient id="cyl"><stop offset="0" stop-color="#b2b1d2"/><stop offset=".4" stop-color="#9c9bba"/><stop offset=".75" stop-color="#8b8aa4"/><stop offset="1" stop-color="#9291aa"/></linearGradient>
    <linearGradient id="fil"><stop offset="0" stop-color="#9c9bc0"/><stop offset=".45" stop-color="#dddcfa"/><stop offset=".6" stop-color="#c4c3e4"/><stop offset="1" stop-color="#9897b8"/></linearGradient>
    <linearGradient id="bore" x2="1" y2="1"><stop offset="0" stop-color="#77768c"/><stop offset=".5" stop-color="#a3a2be"/><stop offset="1" stop-color="#d2d1f0"/></linearGradient>
  </defs>
  <g stroke="#0c0c18" stroke-width="1.300" stroke-linejoin="round">
    <path fill="#77778a" d="M568 197 600 188.500V206L592 211Z"/>
    <path fill="#62626f" d="M630 229 646.500 212V238L640 240Z"/><path d="M641 222V234"/>
    <path fill="#bebde2" d="M548 189 571 173.500 600 188.500 568 197 592.500 210C598 208 602 203 606 201C613 196 634 195 642 203C648 209 648 216 641 222L630 229 654 240.500 664 222 693.500 237 671 251C622 246 572 225 548 189Z"/>
    <ellipse fill="url(#bore)" cx="622.500" cy="211" rx="13" ry="7.500"/>
    <path fill="url(#cyl)" d="M548 189C572 225 622 246 671 251L669 381 546 318Z"/>
    <path fill="url(#fil)" d="M546 318 669 381C669 385 668 387 665 388.500L541 326Q546 323 546 318Z"/>
    <path fill="#b0afd2" d="M541 326 665 388.500 644.500 402C610 362 567 342 521 339Z"/>
    <path fill="#9d9cbf" d="M521 339C567 342 610 362 644.500 402L641.500 571C595 571 548 545 518 508Z"/>
    <path fill="#696979" d="M671 251 693.500 237 690 539 641.500 571 644.500 402 664 389Q669 386 669 380Z"/>
    <ellipse fill="url(#bore)" cx="582" cy="391" rx="9" ry="12.500" transform="rotate(-30 582 391)"/>
    <ellipse fill="url(#bore)" cx="580" cy="507" rx="11" ry="15.500" transform="rotate(-30 580 507)"/>
    <g fill="#e8e8f6"><ellipse cx="683" cy="326" rx="2.800" ry="4.800" transform="rotate(25 683 326)"/><ellipse cx="682" cy="392" rx="2.800" ry="4.800" transform="rotate(25 682 392)"/><ellipse cx="681" cy="458" rx="2.800" ry="4.800" transform="rotate(25 681 458)"/><ellipse cx="680" cy="524" rx="2.800" ry="4.800" transform="rotate(25 680 524)"/></g>
    <path fill="none" d="M681 325 685 323M680 391 684 389M679 457 683 455M678 523 682 521"/>
  </g></svg>`);

define('view-compass', `<style>:host{display:block;position:absolute;right:60px;top:22px;width:84px;height:108px}svg{display:block;width:100%;height:100%}text{font:11px "Open Sans",sans-serif;fill:#d8d040}</style>
  <svg viewBox="1110 102 84 108" role="img" aria-label="Compass"><g fill="#1f4560" stroke="#d4ccf4" stroke-width="1.400" stroke-linejoin="round">
  <path d="M1149.500 119C1133 131 1120 150 1120 174L1149.500 155.500 1183.500 172C1182 148 1168 129 1149.500 119Z"/><path d="M1147 166 1183 184C1184 197 1168 205 1149 205C1132 205 1119 199 1115 187Z"/><path d="M1149.500 108V187"/></g>
  <circle cx="1150" cy="109" r="3" fill="#d4ccf4"/><rect x="1145" y="183" width="8" height="8" rx="2" fill="#d80010"/>
  <text x="1151" y="117">z</text><text x="1121" y="184">x</text><text x="1183" y="183">y</text></svg>`);

define('axis-mark', `<style>:host{display:block;position:absolute;right:8px;bottom:12px;width:44px;height:26px}svg{display:block;width:100%;height:100%}text{font:11px "Open Sans",sans-serif;fill:#f0f0f8}</style>
  <svg viewBox="1202 621 44 26" aria-hidden="true"><path d="M1220 621V630L1211 636M1220 630 1236 638" fill="none" stroke="#f0f0f8"/><text x="1205" y="641">x</text><text x="1237" y="640">y</text></svg>`);

define('float-window', `<style>
  :host{display:block;position:absolute;left:var(--x);top:var(--y);width:var(--w);background:#cfcfe6;box-shadow:0 1px 6px rgba(10,10,30,.6)}
  header{display:flex;align-items:center;height:27px;background:#fff;color:#333;padding:0 1px 0 7px}
  h2{flex:1;min-width:0;margin:0;font:10px/24px Lato,"Open Sans",sans-serif;height:27px;white-space:nowrap}
  button{all:unset;width:16px;height:17px;background:#c4494e;color:#fff;display:grid;place-items:center;flex:none} button cat-icon{width:8px;height:8px}
  section{display:flex;height:28px;background:linear-gradient(#f2f2fa,#d3d3e9 8px,#cbcbe2 18px,#9c9cb4)}
  section div{display:flex;align-items:flex-start;flex:1;padding:2px 1px 0 0}
  :host([vertical]) section{flex-direction:column;height:auto;background:linear-gradient(90deg,#f2f2fa,#d3d3e9 8px,#c8c8e0 22px,#a4a4bc)}
  :host([vertical]) section div{display:block;padding:0 0 0 3px}
  :host([vertical]) section div ::slotted(tool-button[more]){height:26px}
  :host([vertical]) section div ::slotted(hr){height:1px;border:0;border-bottom:1px solid #f6f6ff;background:#9898ac;margin:2px 0}
  </style><header><h2></h2><button aria-label="Close"><cat-icon name="xmark"></cat-icon></button></header><section><grip-line></grip-line><div><slot></slot></div></section>`,
  (h, r) => {
    r.querySelector('h2').textContent = h.getAttribute('heading');
    const grip = r.querySelector('grip-line');
    if (h.hasAttribute('vertical')) { grip.toggleAttribute('flat', true); grip.toggleAttribute('first', true); }
    else grip.toggleAttribute('short', true);
  });

define('side-dock', `<style>
  :host{display:flex;flex-direction:column;box-sizing:border-box;width:26px;flex:none;overflow:hidden;border-left:2px solid #fff;background:linear-gradient(90deg,#f0f0fa,#d2d2ea 8px,#cacae2);padding-left:3px}
  tool-button{flex:none;height:24px;width:24px} tool-button[more]{height:26px} grip-line[flat]{margin-left:-3px}
  </style><grip-line flat first></grip-line>${['gearbig', 'g1 g2 g3 g4', 'select+', 'iview+', 'gplan constr', 'abc+ flag+ stamp', 'point line plane', 'measure caliper mass', 'chev'].map(btn).join('<grip-line flat></grip-line>')}`);

define('catia-app', `<style>
  :host{display:flex;flex-direction:column;box-sizing:border-box;height:100vh;padding:15px 0;background:#000}
  main{flex:1;display:flex;min-height:0}
  .canvas{flex:1;position:relative;overflow:hidden;background:linear-gradient(#333366 0,#3b3b6c 28%,#444474 56%,#4c4c7c 69%,#7e7ea2 85%,#a6a6c0 100%)}
  </style>
  <title-bar></title-bar><menu-bar></menu-bar><top-tools></top-tools>
  <main><div class="canvas">
    <spec-tree></spec-tree><slide-model></slide-model><view-compass></view-compass><axis-mark></axis-mark>
    <float-window heading="S" vertical style="--x:1205px;--y:77px;--w:31px">${btn('sketch+')}</float-window>
    <float-window heading="Sketch-Based Features" style="--x:945px;--y:141px;--w:253px">${btn('pad+ pocket+ shaft groove hole rib slot stiff+ multi loft')}</float-window>
    <float-window heading="Dress-Up Features" style="--x:970px;--y:221px;--w:183px">${btn('fillet+ chamfer draft+ shell thick target remove+')}</float-window>
    <float-window heading="Fillets" style="--x:983px;--y:291px;--w:131px">${btn('fillet fvar fface ftri ftrim').replace('icon="fface"', 'icon="fface" lit')}</float-window>
    <float-window heading="T" vertical style="--x:1214px;--y:395px;--w:31px">${btn('trans+')}<hr>${btn('mirror pattern+')}<hr>${btn('scale+')}</float-window>
    <float-window heading="View" style="--x:546px;--y:511px;--w:299px">${btn('fly fit pan rotate zoomin zoomout normal multiv iso+ shade+ hide swap')}</float-window>
  </div><side-dock></side-dock></main>
  <bottom-tools></bottom-tools><status-bar></status-bar>`);
</script>
</body>
</html>
